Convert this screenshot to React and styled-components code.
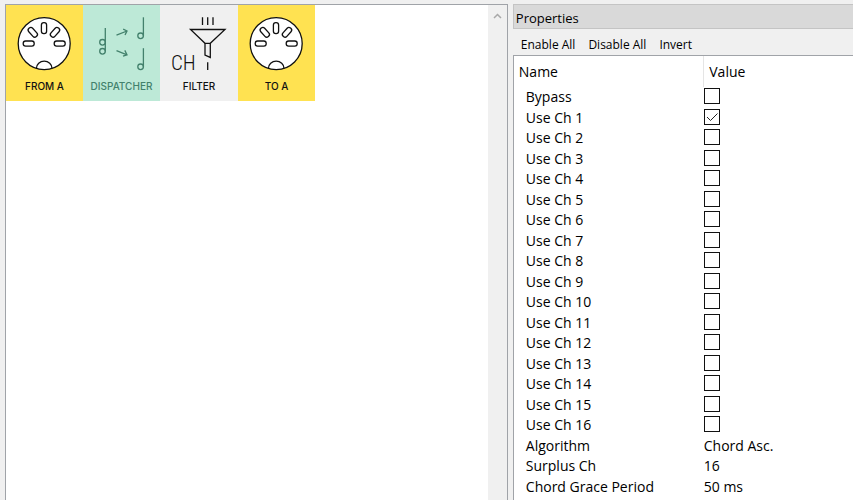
import { useState } from "react";
import styled, { createGlobalStyle } from "styled-components";

const GlobalStyle = createGlobalStyle`
  * {
    box-sizing: border-box;
  }

  body {
    margin: 0;
    background: #f0f0f0;
    color: #000;
    font-family: "Open Sans", "Noto Sans", sans-serif;
    font-size: 14px;
  }
`;

const Window = styled.div`
  display: flex;
  gap: 5px;
  height: 100vh;
  padding: 4px 0 0 5px;
  overflow: hidden;
`;

const Canvas = styled.main`
  flex: 502 1 0;
  min-width: 0;
  display: flex;
  justify-content: space-between;
  background: #fff;
  border: 1px solid #a0a3a8;
  border-bottom: 0;
`;

const Chain = styled.div`
  display: grid;
  grid-template-columns: 77px 77px 78px 77px;
  align-items: start;
`;

const Tile = styled.button`
  display: flex;
  flex-direction: column;
  align-items: center;
  height: 96px;
  padding: 0;
  border: 0;
  background: ${(props) => props.$background};
  color: ${(props) => props.$color};
  font-family: Inter, sans-serif;
  font-size: 10px;
  font-weight: 500;
  line-height: 16px;

  svg {
    display: block;
    width: 77px;
    height: 73px;
    fill: none;
    stroke: currentColor;
  }
`;

const Scrollbar = styled.div`
  width: 19px;
  background: #f0f0f0;
`;

const ScrollButton = styled.button`
  display: flex;
  align-items: center;
  justify-content: center;
  width: 100%;
  height: 21px;
  padding: 0;
  border: 0;
  background: none;
  color: #a8a8a8;
`;

const Panel = styled.aside`
  flex: 341 1 0;
  min-width: 0;
  display: flex;
  flex-direction: column;
`;

const PanelTitle = styled.h2`
  margin: 0;
  height: 25px;
  padding-left: 2px;
  border: 1px solid #c4c4c4;
  border-right: 0;
  background: #d9d9d9;
  font-size: 13px;
  font-weight: 400;
  line-height: 26px;
`;

const Toolbar = styled.div`
  display: flex;
  align-items: center;
  gap: 13px;
  height: 26px;
  padding: 5px 8px 0;
`;

const ToolButton = styled.button`
  padding: 0;
  border: 0;
  background: none;
  color: inherit;
  font-family: inherit;
  font-size: 12px;
  line-height: 20px;
  white-space: nowrap;
`;

const Sheet = styled.div`
  flex: 1;
  border: 1px solid #a0a3a8;
  border-width: 1px 0 0 1px;
  background: #fff;
`;

const Table = styled.table`
  width: 100%;
  table-layout: fixed;
  border-collapse: collapse;
`;

const HeadCell = styled.th`
  width: ${(props) => props.$width};
  height: 31px;
  padding: 1px 5px 0;
  border-left: ${(props) => (props.$divided ? "1px solid #e5e5e5" : "0")};
  font-weight: 400;
  line-height: 20px;
  text-align: left;
`;

const Row = styled.tr`
  height: 20px;
  line-height: 20px;

  &:nth-child(even) {
    height: 21px;
  }
`;

const NameCell = styled.th`
  padding: 0 0 0 12px;
  font-weight: 400;
  text-align: left;
`;

const ValueCell = styled.td`
  padding: 0;
`;

const CheckWrap = styled.span`
  display: grid;
  width: 16px;
  height: 16px;
  margin-bottom: 2px;

  > * {
    grid-area: 1 / 1;
  }

  svg {
    fill: none;
    stroke: #222;
    pointer-events: none;
  }
`;

const Checkbox = styled.input`
  appearance: none;
  width: 16px;
  height: 16px;
  margin: 0;
  border: 1px solid #111;
  background: #fff;
`;

const channels = Array.from({ length: 16 }, (_, i) => `Use Ch ${i + 1}`);
const toggles = ["Bypass", ...channels];

const settings = [
  { name: "Algorithm", value: "Chord Asc." },
  { name: "Surplus Ch", value: "16" },
  { name: "Chord Grace Period", value: "50 ms" },
];

const MidiPortIcon = () => (
  <svg viewBox="0 0 77 73" strokeWidth="1.3" aria-hidden="true">
    <circle cx="38.2" cy="38.6" r="26" fill="#fff" />
    <rect x="35.4" y="17.6" width="5.2" height="11" rx="2.4" />
    <rect x="24.2" y="21.8" width="5.2" height="11" rx="2.4" transform="rotate(-42 26.8 27.3)" />
    <rect x="46.4" y="21.8" width="5.2" height="11" rx="2.4" transform="rotate(42 49 27.3)" />
    <rect x="17.2" y="36" width="11" height="5.2" rx="2.4" />
    <rect x="48.2" y="36" width="11" height="5.2" rx="2.4" />
    <path d="M30.4 63.4a7.8 7.2 0 0 1 15.6 0" />
  </svg>
);

const DispatcherIcon = () => (
  <svg viewBox="0 0 77 73" strokeWidth="1.3" aria-hidden="true">
    <path d="M22.3 23v23.5" />
    <circle cx="19.5" cy="37.3" r="2.8" />
    <circle cx="19.5" cy="46.3" r="2.8" />
    <path d="M33.5 30.2 44 26M40.2 24.2 44 26l-2 4" />
    <path d="M33.5 45.7 44 49.8M41.8 45.4l2.2 4.4-4 1.4" />
    <path d="M60.4 12.3V31" />
    <circle cx="57.6" cy="30.8" r="2.8" />
    <path d="M60.4 43.2V62" />
    <circle cx="57.6" cy="61.8" r="2.8" />
  </svg>
);

const FilterIcon = () => (
  <svg viewBox="0 0 77 73" strokeWidth="1.3" aria-hidden="true">
    <path d="M41.5 12.3V20M46.7 12.3V20M52 12.3V20" />
    <path d="M29.5 24.5H64L49.3 38.3H44Z" />
    <path d="M44 38.3V50l5.3 2.4V38.3M46.7 57.3V65" />
    <text
      x="10"
      y="65"
      fill="currentColor"
      stroke="none"
      fontFamily="'Roboto Condensed', 'Liberation Sans Narrow', 'Open Sans Condensed', sans-serif"
      fontSize="21"
      fontWeight="300"
    >
      CH
    </text>
  </svg>
);

const tiles = [
  { label: "FROM A", background: "#ffe251", color: "#111", Icon: MidiPortIcon },
  { label: "DISPATCHER", background: "#bde9d7", color: "#43816c", Icon: DispatcherIcon },
  { label: "FILTER", background: "#f0f0f0", color: "#111", Icon: FilterIcon },
  { label: "TO A", background: "#ffe251", color: "#111", Icon: MidiPortIcon },
];

const App = () => {
  const [checked, setChecked] = useState({ "Use Ch 1": true });

  const setAll = (getValue) => {
    const next = { ...checked };
    channels.forEach((name) => {
      next[name] = getValue(name);
    });
    setChecked(next);
  };

  return (
    <>
      <GlobalStyle />
      <Window>
        <Canvas>
          <Chain>
            {tiles.map(({ label, background, color, Icon }) => (
              <Tile key={label} type="button" $background={background} $color={color}>
                <Icon />
                {label}
              </Tile>
            ))}
          </Chain>
          <Scrollbar>
            <ScrollButton type="button" aria-label="Scroll up">
              <svg width="9" height="6" viewBox="0 0 9 6" fill="none" stroke="currentColor" strokeWidth="1.5">
                <path d="M1 5l3.5-3.5L8 5" />
              </svg>
            </ScrollButton>
          </Scrollbar>
        </Canvas>

        <Panel>
          <PanelTitle>Properties</PanelTitle>
          <Toolbar>
            <ToolButton type="button" onClick={() => setAll(() => true)}>Enable All</ToolButton>
            <ToolButton type="button" onClick={() => setAll(() => false)}>Disable All</ToolButton>
            <ToolButton type="button" onClick={() => setAll((name) => !checked[name])}>Invert</ToolButton>
          </Toolbar>
          <Sheet>
            <Table>
              <thead>
                <tr>
                  <HeadCell scope="col" $width="56%">Name</HeadCell>
                  <HeadCell scope="col" $divided>Value</HeadCell>
                </tr>
              </thead>
              <tbody>
                {toggles.map((name) => {
                  const id = name.replaceAll(" ", "-").toLowerCase();
                  return (
                    <Row key={name}>
                      <NameCell scope="row">
                        <label htmlFor={id}>{name}</label>
                      </NameCell>
                      <ValueCell>
                        <CheckWrap>
                          <Checkbox
                            id={id}
                            type="checkbox"
                            checked={!!checked[name]}
                            onChange={(e) => setChecked({ ...checked, [name]: e.target.checked })}
                          />
                          {checked[name] && (
                            <svg width="16" height="16" viewBox="0 0 16 16" aria-hidden="true">
                              <path d="M3 8l3.5 3.5L13.5 4.5" />
                            </svg>
                          )}
                        </CheckWrap>
                      </ValueCell>
                    </Row>
                  );
                })}
                {settings.map(({ name, value }) => (
                  <Row key={name}>
                    <NameCell scope="row">{name}</NameCell>
                    <ValueCell>{value}</ValueCell>
                  </Row>
                ))}
              </tbody>
            </Table>
          </Sheet>
        </Panel>
      </Window>
    </>
  );
};

export default App;
